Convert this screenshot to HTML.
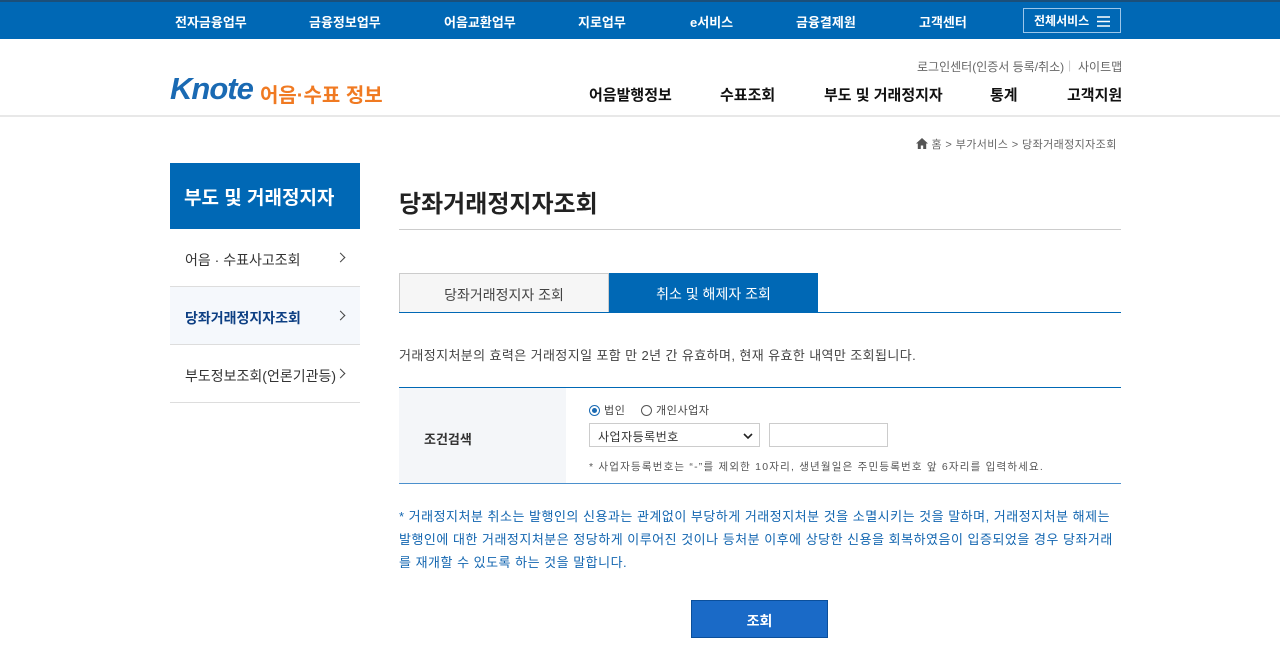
<!DOCTYPE html>
<html><head><meta charset="utf-8"><style>
*{margin:0;padding:0;box-sizing:border-box}
body{width:1280px;height:656px;overflow:hidden;background:#fff;font-family:"Liberation Sans","Noto Sans CJK KR",sans-serif;color:#333;position:relative}
.top{position:absolute;left:0;top:0;width:1280px;height:39px;background:#0068b5;border-top:2px solid #1b4f7a}
.top span{position:absolute;top:10px;color:#fff;font-size:13px;font-weight:bold}
.all{position:absolute;left:1023px;top:6px;width:98px;height:25px;border:1px solid #9cc6ea;color:#fff;font-size:12px;font-weight:bold;padding:3px 0 0 10px}
.hdr{position:absolute;left:0;top:39px;width:1280px;height:78px;border-bottom:2px solid #e8e8e8}
.logo{position:absolute;left:170px;top:71px;font-size:31px;font-weight:bold;font-style:italic;color:#1a6ab3;letter-spacing:-1px}
.logo2{position:absolute;left:260px;top:79px;font-size:20px;color:#f07a22;font-weight:bold}
.util{position:absolute;top:58px;font-size:12px;color:#666}
.nav{position:absolute;top:84px;font-size:15px;font-weight:bold;color:#111}
.bc{position:absolute;top:136px;font-size:11px;color:#666;left:916px;letter-spacing:0.4px}
.side{position:absolute;left:170px;top:163px;width:190px}
.side .h{height:66px;background:#0068b5;color:#fff;font-size:19px;font-weight:bold;padding:20px 0 0 14px}
.side .i{height:58px;border-bottom:1px solid #ddd;font-size:14px;padding:21px 0 0 15px;position:relative;color:#333}
.side .i.on{background:#f5f8fc;color:#0d3f83;font-weight:bold}
.side .i:after{content:"";position:absolute;right:16px;top:25px;width:6px;height:6px;border-top:1.5px solid #444;border-right:1.5px solid #444;transform:rotate(45deg)}
h1{position:absolute;left:399px;top:184px;font-size:24px;font-weight:bold;color:#222;font-weight:bold}
.line{position:absolute;left:399px;top:229px;width:722px;height:1px;background:#ccc}
.tab1{position:absolute;left:399px;top:273px;width:210px;height:40px;border:1px solid #ccc;background:#f6f6f6;font-size:14px;text-align:center;padding-top:11px;color:#444}
.tab2{position:absolute;left:609px;top:273px;width:209px;height:40px;background:#0068b5;color:#fff;font-size:14px;text-align:center;padding-top:11px}
.tabline{position:absolute;left:399px;top:312px;width:722px;height:1px;background:#0068b5}
.desc{position:absolute;left:399px;top:345px;font-size:13px;color:#444;letter-spacing:0.4px}
.form{position:absolute;left:399px;top:387px;width:722px;height:97px;border-top:1px solid #0068b5;border-bottom:1px solid #4b90cd}
.form .th{position:absolute;left:0;top:0;width:167px;height:95px;background:#f4f6f9;font-size:13px;font-weight:bold;padding:41px 0 0 25px;color:#333}
.r{position:absolute;top:14px;font-size:11px;color:#444;letter-spacing:0.6px}
.rad{display:inline-block;width:11px;height:11px;border:1px solid #555;border-radius:50%;vertical-align:-2px;margin-right:4px;position:relative}
.rad.on{border-color:#1a6ab3}.rad.on:after{content:"";position:absolute;left:2px;top:2px;width:5px;height:5px;border-radius:50%;background:#1a6ab3}
.sel{position:absolute;left:190px;top:35px;width:171px;height:24px;border:1px solid #ccc;font-size:12px;padding:4px 0 0 8px;color:#333;letter-spacing:0.5px}
.inp{position:absolute;left:370px;top:35px;width:119px;height:24px;border:1px solid #ccc}
.note{position:absolute;left:190px;top:71px;font-size:10.5px;color:#555;letter-spacing:1.2px;white-space:nowrap}
.blue{position:absolute;left:399px;top:505px;font-size:13px;line-height:23px;color:#1366b0;white-space:nowrap;letter-spacing:0.5px}
.btn{position:absolute;left:691px;top:600px;width:137px;height:38px;background:#1a6ac7;border:1px solid #0b4f9b;color:#fff;font-size:14px;font-weight:bold;text-align:center;padding-top:10px}
</style></head><body>
<div class="top">
<span style="left:175px">전자금융업무</span><span style="left:309px">금융정보업무</span><span style="left:444px">어음교환업무</span><span style="left:578px">지로업무</span><span style="left:690px">e서비스</span><span style="left:796px">금융결제원</span><span style="left:919px">고객센터</span>
<div class="all">전체서비스 <svg width="13" height="11" style="position:absolute;right:10px;top:7px"><path d="M0 1h13M0 5.5h13M0 10h13" stroke="#fff" stroke-width="1.6"/></svg></div>
</div>
<div class="hdr"></div>
<div class="logo">Knote</div><div class="logo2">어음·수표 정보</div>
<div class="util" style="left:917px">로그인센터(인증서 등록/취소)</div><div class="util" style="left:1068px;color:#ccc">|</div><div class="util" style="left:1078px">사이트맵</div>
<div class="nav" style="left:589px">어음발행정보</div><div class="nav" style="left:720px">수표조회</div><div class="nav" style="left:824px">부도 및 거래정지자</div><div class="nav" style="left:990px">통계</div><div class="nav" style="left:1067px">고객지원</div>
<div class="bc"><svg width="12" height="11" style="vertical-align:-1px"><path d="M6 0L0 5.5h1.8V11h3V7.5h2.4V11h3V5.5H12z" fill="#555"/></svg> 홈 &gt; 부가서비스 &gt; 당좌거래정지자조회</div>
<div class="side"><div class="h">부도 및 거래정지자</div><div class="i">어음 · 수표사고조회</div><div class="i on">당좌거래정지자조회</div><div class="i">부도정보조회(언론기관등)</div></div>
<h1>당좌거래정지자조회</h1><div class="line"></div>
<div class="tab1">당좌거래정지자 조회</div><div class="tab2">취소 및 해제자 조회</div><div class="tabline"></div>
<div class="desc">거래정지처분의 효력은 거래정지일 포함 만 2년 간 유효하며, 현재 유효한 내역만 조회됩니다.</div>
<div class="form"><div class="th">조건검색</div>
<div class="r" style="left:190px"><span class="rad on"></span>법인</div><div class="r" style="left:242px"><span class="rad"></span>개인사업자</div>
<div class="sel">사업자등록번호<svg width="10" height="7" style="position:absolute;right:6px;top:9px"><path d="M1 1l4 4 4-4" stroke="#222" stroke-width="1.6" fill="none"/></svg></div><div class="inp"></div>
<div class="note">* 사업자등록번호는 “-”를 제외한 10자리, 생년월일은 주민등록번호 앞 6자리를 입력하세요.</div></div>
<div class="blue">* 거래정지처분 취소는 발행인의 신용과는 관계없이 부당하게 거래정지처분 것을 소멸시키는 것을 말하며, 거래정지처분 해제는<br>발행인에 대한 거래정지처분은 정당하게 이루어진 것이나 등처분 이후에 상당한 신용을 회복하였음이 입증되었을 경우 당좌거래<br>를 재개할 수 있도록 하는 것을 말합니다.</div>
<div class="btn">조회</div>
</body></html>
